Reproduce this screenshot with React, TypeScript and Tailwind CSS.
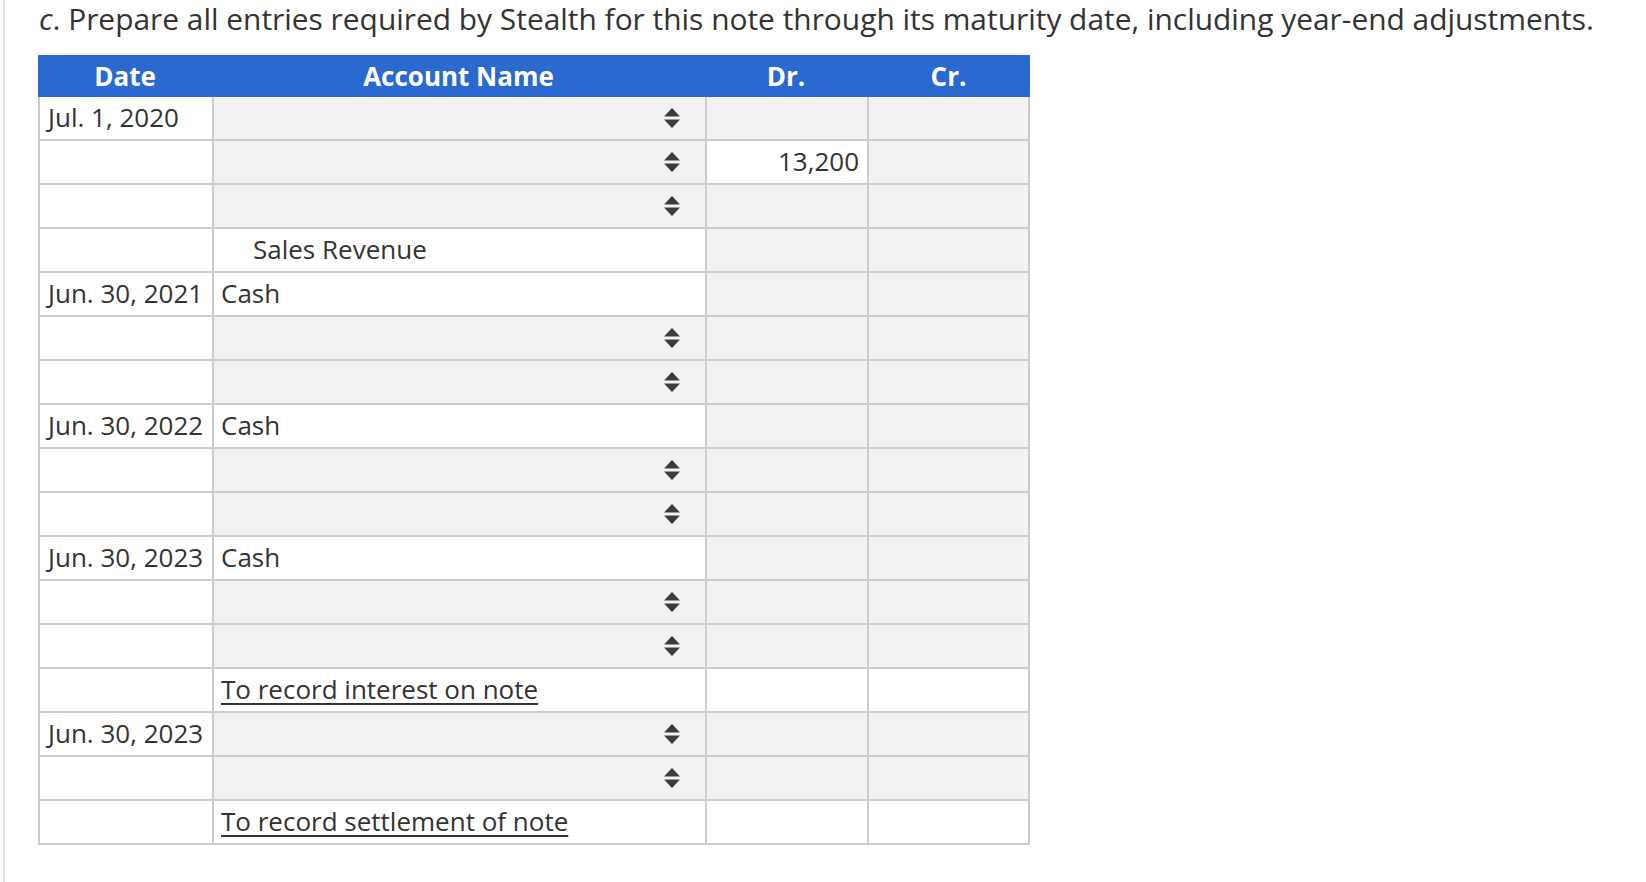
type Cell = "text" | "select" | "blank";

type Row = {
  date?: string;
  account: { kind: Cell; label?: string; indent?: boolean; note?: boolean };
  dr?: { value?: string; white?: boolean };
  cr?: { white?: boolean };
};

const rows: Row[] = [
  { date: "Jul. 1, 2020", account: { kind: "select" } },
  { account: { kind: "select" }, dr: { value: "13,200", white: true } },
  { account: { kind: "select" } },
  { account: { kind: "text", label: "Sales Revenue", indent: true } },
  { date: "Jun. 30, 2021", account: { kind: "text", label: "Cash" } },
  { account: { kind: "select" } },
  { account: { kind: "select" } },
  { date: "Jun. 30, 2022", account: { kind: "text", label: "Cash" } },
  { account: { kind: "select" } },
  { account: { kind: "select" } },
  { date: "Jun. 30, 2023", account: { kind: "text", label: "Cash" } },
  { account: { kind: "select" } },
  { account: { kind: "select" } },
  {
    account: { kind: "text", label: "To record interest on note", note: true },
    dr: { white: true },
    cr: { white: true },
  },
  { date: "Jun. 30, 2023", account: { kind: "select" } },
  { account: { kind: "select" } },
  {
    account: { kind: "text", label: "To record settlement of note", note: true },
    dr: { white: true },
    cr: { white: true },
  },
];

function SortArrows() {
  return (
    <svg width="16" height="20" viewBox="0 0 16 20" className="text-[#3a3a3a]">
      <path d="M8 0 L16 8.5 L0 8.5 Z" fill="currentColor" />
      <path d="M0 11.5 L16 11.5 L8 20 Z" fill="currentColor" />
    </svg>
  );
}

export default function App() {
  return (
    <div
      className="flex h-screen w-full bg-white text-[#333]"
      style={{ fontFamily: '"Open Sans", "Noto Sans", sans-serif' }}
    >
      <div className="w-[5px] shrink-0 border-r-2 border-[#dedede] bg-[#f8f9fa]" />
      <div className="flex flex-col pl-[33px]">
        <p className="-mt-[1px] pl-[1px] text-[29.9px] leading-[40px] text-[#333]">
          <span className="italic">c</span>. Prepare all entries required by Stealth for this note through its
          maturity date, including year-end adjustments.
        </p>

        <div className="mt-[16px] w-[992px]">
          <div className="grid h-[42px] grid-cols-[174px_493px_162px_163px] items-center bg-[#2a69d0] text-[26px] font-bold text-white">
            <div className="text-center">Date</div>
            <div className="text-center">Account Name</div>
            <div className="text-center">Dr.</div>
            <div className="text-center">Cr.</div>
          </div>

          <div className="grid grid-cols-[172px_491px_160px_159px] gap-[2px] bg-[#cccccc] px-[2px] pb-[2px] text-[26px]">
            {rows.map((row, i) => (
              <RowCells key={i} row={row} />
            ))}
          </div>
        </div>
      </div>
    </div>
  );
}

function RowCells({ row }: { row: Row }) {
  const { account } = row;
  return (
    <>
      <div className="flex h-[42px] items-center bg-white px-[8px] pb-[1px]">{row.date}</div>
      {account.kind === "select" ? (
        <div className="flex h-[42px] items-center justify-end bg-[#f2f2f2] pr-[25px]">
          <SortArrows />
        </div>
      ) : (
        <div
          className={
            account.indent
              ? "flex h-[42px] items-center bg-white pb-[1px] pl-[39px]"
              : "flex h-[42px] items-center bg-white pb-[1px] pl-[7px]"
          }
        >
          <span className={account.note ? "underline underline-offset-[4px] decoration-[1.5px]" : ""}>
            {account.label}
          </span>
        </div>
      )}
      <div
        className={
          row.dr?.white
            ? "flex h-[42px] items-center justify-end bg-white pb-[1px] pr-[8px]"
            : "flex h-[42px] items-center justify-end bg-[#f2f2f2] pb-[1px] pr-[8px]"
        }
      >
        {row.dr?.value}
      </div>
      <div className={row.cr?.white ? "h-[42px] bg-white" : "h-[42px] bg-[#f2f2f2]"} />
    </>
  );
}
